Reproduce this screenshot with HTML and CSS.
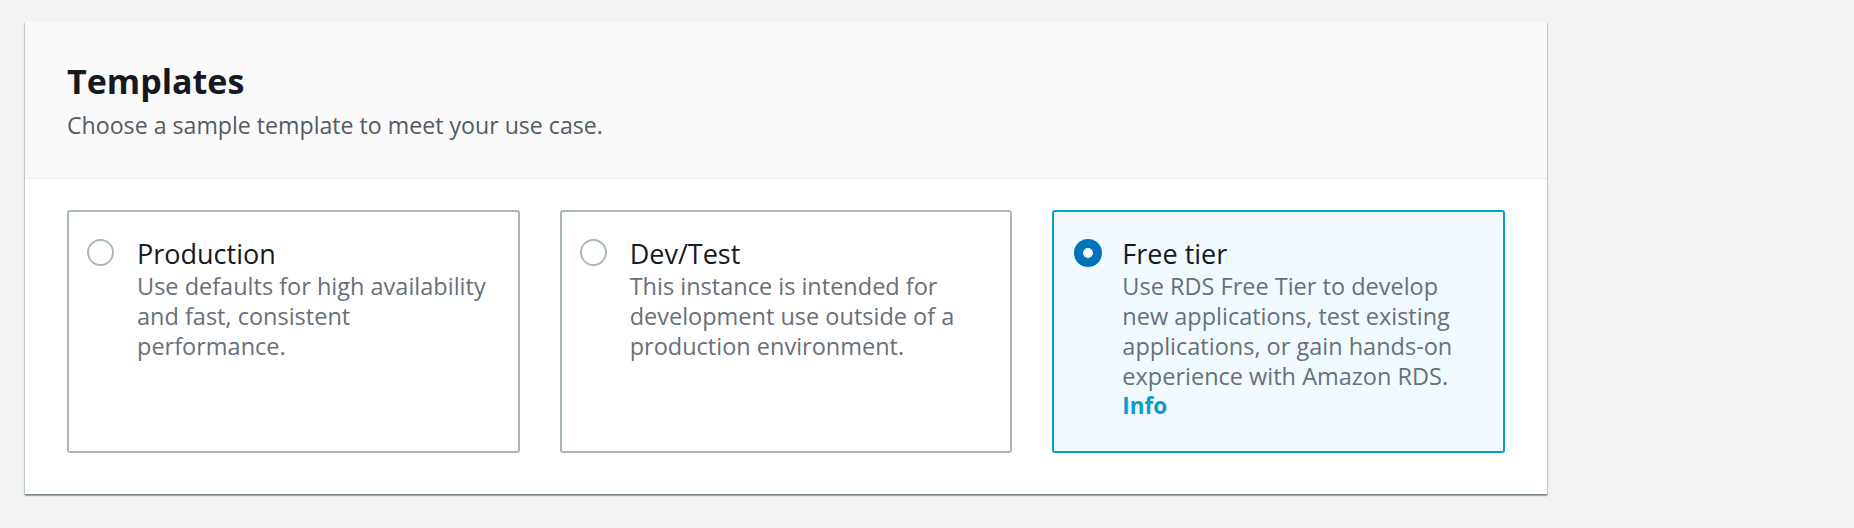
FILE: index.html
```html
<!DOCTYPE html>
<html lang="en">
<head>
<meta charset="utf-8">
<title>Templates</title>
<link rel="stylesheet" href="styles.css">
</head>
<body>
<div class="panel">
  <div class="panel-header">
    <h2 class="panel-title">Templates</h2>
    <p class="panel-subtitle">Choose a sample template to meet your use case.</p>
  </div>
  <div class="panel-body">
    <div class="tiles">
      <div class="tile">
        <span class="radio"></span>
        <div class="tile-text">
          <div class="tile-title">Production</div>
          <div class="tile-desc">Use defaults for high availability and fast, consistent performance.</div>
        </div>
      </div>
      <div class="tile">
        <span class="radio"></span>
        <div class="tile-text">
          <div class="tile-title">Dev/Test</div>
          <div class="tile-desc">This instance is intended for development use outside of a production environment.</div>
        </div>
      </div>
      <div class="tile tile-selected">
        <span class="radio radio-checked"></span>
        <div class="tile-text">
          <div class="tile-title">Free tier</div>
          <div class="tile-desc">Use RDS Free Tier to develop new applications, test existing applications, or gain hands-on experience with Amazon RDS.</div>
          <a class="info-link" href="#">Info</a>
        </div>
      </div>
    </div>
  </div>
</div>
</body>
</html>
```

FILE: styles.css
```css
html, body {
  margin: 0;
  padding: 0;
}
body {
  background: #f2f3f3;
  font-family: "Open Sans", "Liberation Sans", sans-serif;
  padding: 22px 0 0 25px;
  height: 528px;
  box-sizing: border-box;
}
.panel {
  width: 1522px;
  background: #ffffff;
  box-shadow: 0 2px 1px 0 rgba(0, 28, 36, 0.3),
              1px 1px 1px 0 rgba(0, 28, 36, 0.15),
              -1px 1px 1px 0 rgba(0, 28, 36, 0.15);
}
.panel-header {
  background: #fafafa;
  padding: 39px 42px 38px 42px;
  border-bottom: 1px solid #eaeded;
}
.panel-title {
  margin: 0;
  font-size: 34px;
  line-height: 40px;
  font-weight: 700;
  color: #16191f;
}
.panel-subtitle {
  margin: 9px 0 0 0;
  font-size: 23.15px;
  line-height: 30px;
  color: #545b64;
}
.panel-body {
  padding: 31px 42px 41px 42px;
}
.tiles {
  display: grid;
  grid-template-columns: 1fr 1fr 1fr;
  gap: 40px;
}
.tile {
  display: flex;
  align-items: flex-start;
  gap: 23px;
  border: 2px solid #aab7b8;
  border-radius: 3px;
  padding: 27px 24px 30px 18px;
  background: #ffffff;
}
.tile-selected {
  border-color: #00a1c9;
  background: #f1faff;
}
.radio {
  flex: none;
  width: 27px;
  height: 27px;
  box-sizing: border-box;
  border: 2px solid #aab7b8;
  border-radius: 50%;
  background: #ffffff;
}
.radio-checked {
  width: 28px;
  height: 28px;
  border: 9px solid #0073bb;
  margin-left: 2px;
  margin-right: -3px;
}
.tile-text {
  flex: 1;
  min-width: 0;
}
.tile-title {
  font-size: 27px;
  line-height: 30px;
  color: #16191f;
}
.tile-desc {
  margin-top: 2px;
  font-size: 23.5px;
  line-height: 30px;
  color: #687078;
}
.info-link {
  display: block;
  font-size: 22.5px;
  line-height: 30px;
  font-weight: 700;
  color: #0a9dcb;
  text-decoration: none;
}
```
